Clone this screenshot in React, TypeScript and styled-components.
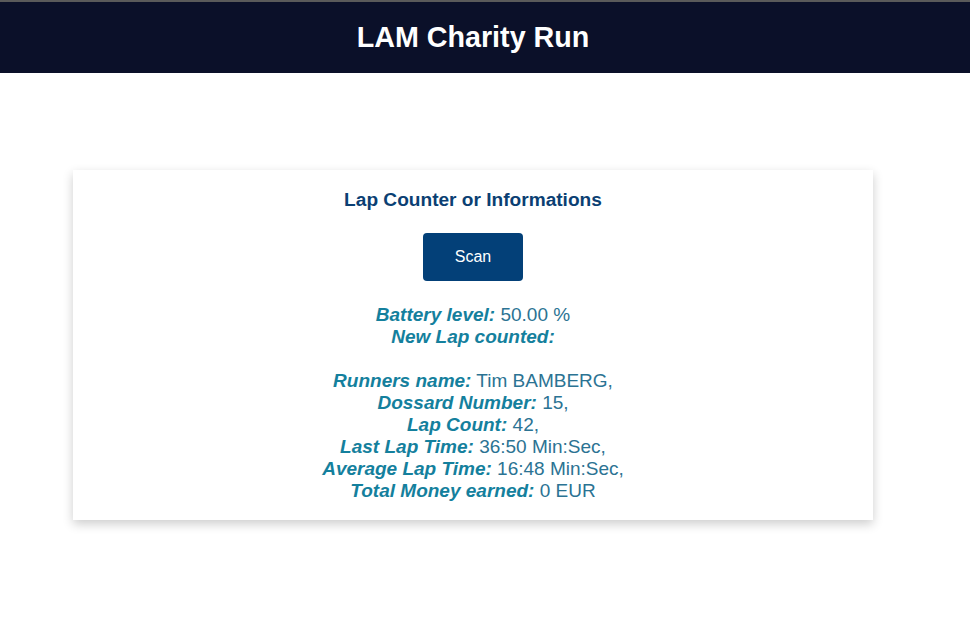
import React from "react";
import styled, { createGlobalStyle } from "styled-components";

const Global = createGlobalStyle`
  html, body { margin: 0; padding: 0; background: #ffffff; }
  body { font-family: "Liberation Sans", Arial, sans-serif; }
`;

const Header = styled.header`
  background: #0b1029;
  border-top: 2px solid #5a5a5a;
  height: 71px;
  display: flex;
  align-items: center;
  justify-content: center;
  padding-right: 24px;
`;

const Title = styled.h1`
  margin: 0;
  color: #ffffff;
  font-size: 28.7px;
  font-weight: 700;
  line-height: 1;
`;

const Main = styled.main`
  width: 946px;
  padding: 97px 0 60px;
  display: flex;
  justify-content: center;
`;

const Card = styled.section`
  width: 800px;
  background: #ffffff;
  box-shadow: 0 4px 10px rgba(0, 0, 0, 0.2);
  padding: 19px 0 18px;
  display: flex;
  flex-direction: column;
  align-items: center;
`;

const CardTitle = styled.h3`
  margin: 0;
  font-size: 19.1px;
  line-height: 22px;
  font-weight: 700;
  color: #0b3f73;
`;

const ScanButton = styled.button`
  margin-top: 22px;
  width: 100px;
  height: 48px;
  border: none;
  border-radius: 4px;
  background: #034078;
  color: #ffffff;
  font-family: "Liberation Sans", Arial, sans-serif;
  font-size: 16px;
  cursor: pointer;
`;

const Info = styled.div`
  margin-top: 23px;
  font-size: 19px;
  line-height: 22px;
  text-align: center;
  color: #2b7393;
`;

const Label = styled.b`
  font-style: italic;
  font-weight: 700;
  color: #14809d;
`;

const Line = styled.div<{ $gapAfter?: boolean }>`
  margin-bottom: ${(p) => (p.$gapAfter ? "22px" : "0")};
`;

const rows: [string, string][] = [
  ["Runners name:", "Tim BAMBERG,"],
  ["Dossard Number:", "15,"],
  ["Lap Count:", "42,"],
  ["Last Lap Time:", "36:50 Min:Sec,"],
  ["Average Lap Time:", "16:48 Min:Sec,"],
  ["Total Money earned:", "0 EUR"],
];

export default function App() {
  return (
    <>
      <Global />
      <Header>
        <Title>LAM Charity Run</Title>
      </Header>
      <Main>
        <Card>
          <CardTitle>Lap Counter or Informations</CardTitle>
          <ScanButton>Scan</ScanButton>
          <Info>
            <Line>
              <Label>Battery level:</Label> 50.00 %
            </Line>
            <Line $gapAfter>
              <Label>New Lap counted:</Label>
            </Line>
            {rows.map(([l, v]) => (
              <Line key={l}>
                <Label>{l}</Label> {v}
              </Line>
            ))}
          </Info>
        </Card>
      </Main>
    </>
  );
}
